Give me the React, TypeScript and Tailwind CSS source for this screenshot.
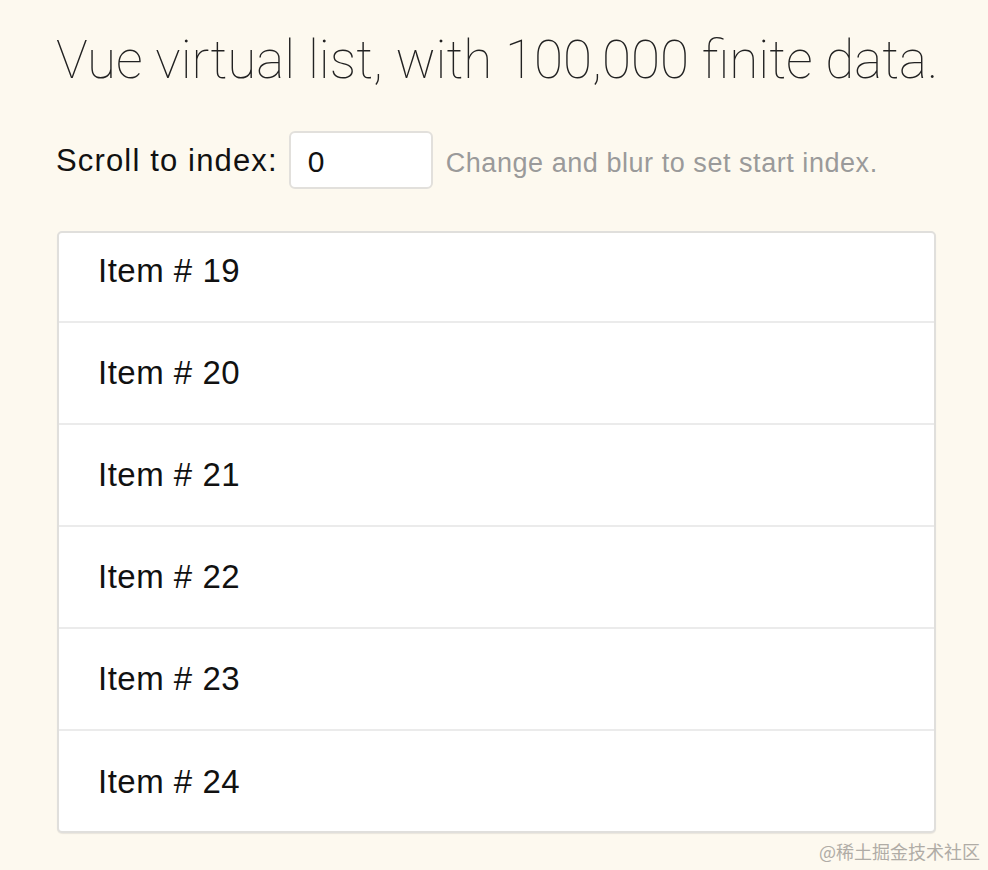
import React from "react";

export default function App() {
  const items = [20, 21, 22, 23, 24];
  return (
    <div className="relative w-[988px] h-[870px] bg-[#fdf9ef] overflow-hidden" style={{ fontFamily: '"Liberation Sans", "Noto Sans CJK SC", sans-serif' }}>
      <div className="pl-[56px] pr-[52px]">
        <h1 className="pt-[28px] h-[100px] text-[53px] leading-[64px] text-[#222] font-thin whitespace-nowrap" style={{ fontFamily: 'Roboto, "Liberation Sans", sans-serif' }}>
          Vue virtual list, with 100,000 finite data.
        </h1>
        <div className="flex items-center mt-[31px] h-[58px]">
          <span className="pt-[3px] text-[31px] tracking-[1.15px] text-[#111] mr-[11px]">Scroll to index:</span>
          <div className="w-[144px] h-[58px] bg-white border-2 border-[#e2e0dc] rounded-[6px] flex items-center pl-[17px] pt-[2px] text-[30px] text-[#111]">0</div>
          <span className="ml-[13px] pt-[6px] text-[27px] tracking-[0.55px] text-[#9a9a9a] whitespace-nowrap">Change and blur to set start index.</span>
        </div>
        <div className="mt-[42px] ml-[1px] w-[879px] h-[602px] bg-white border-2 border-[#e0dfdc] rounded-[5px] overflow-hidden shadow-[0_1px_1px_rgba(0,0,0,0.08)]">
          <div className="-mt-[12px]">
            {[19, ...items].map((n, i) => (
              <div key={n} className={"h-[102px] flex items-center pl-[39px] text-[33px] tracking-[0.5px] text-[#111] " + (i < 5 ? "border-b-2 border-[#ebebeb]" : "")}>
                Item # {n}
              </div>
            ))}
          </div>
        </div>
      </div>
      <div className="absolute right-[8px] bottom-[5px] text-[18px] text-[#b0aca6]" style={{ fontFamily: '"Noto Sans CJK SC", sans-serif' }}>
        @稀土掘金技术社区
      </div>
    </div>
  );
}
